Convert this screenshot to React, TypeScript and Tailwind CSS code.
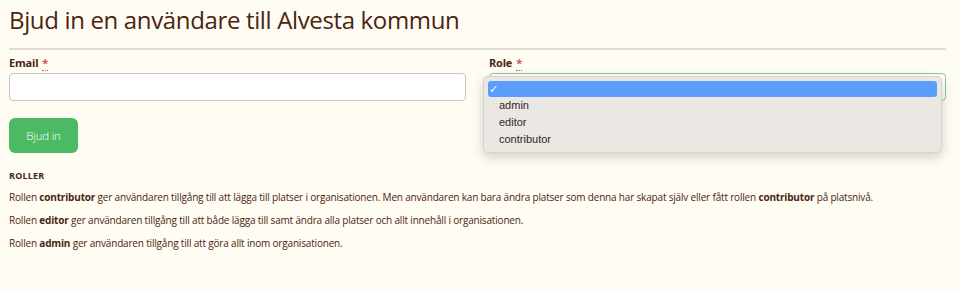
import React from 'react';

const font = { fontFamily: '"Open Sans", "Noto Sans", sans-serif' };

function Required() {
  return (
    <abbr title="required" className="ml-1 text-[#d9534f] no-underline border-b border-dotted border-[#d9534f]">
      *
    </abbr>
  );
}

function RoleDropdown() {
  const options = ['admin', 'editor', 'contributor'];
  return (
    <div
      className="absolute left-[-7px] top-[2px] w-[459px] rounded-[5px] border border-[#d6d2cd] bg-[#ebe7e3] px-[4px] pt-[4px] pb-[4px] shadow-[0_4px_12px_rgba(0,0,0,0.18)]"
      style={{ fontFamily: '"Liberation Sans", Arial, sans-serif' }}
    >
      <div className="flex h-[16px] items-center rounded-[3px] bg-[#5a9dfb] pl-[1px] text-[11px] text-white">✓</div>
      {options.map((o) => (
        <div key={o} className="flex h-[17px] items-center pl-[11px] text-[11px] text-[#2b2b2b]">
          {o}
        </div>
      ))}
    </div>
  );
}

export default function App() {
  return (
    <div className="h-[290px] w-[960px] overflow-hidden bg-[#fffcf4] text-[#4a2511]" style={font}>
      <div className="px-[9px] pt-[6px] pr-[14px]">
        <h1 className="text-[24px] leading-[28px] font-normal tracking-[-0.35px] text-[#4a2511]">
          Bjud in en användare till Alvesta kommun
        </h1>
        <div className="mt-[14px] h-[2px] bg-[#e2ddd3]" />

        <div className="mt-[5px] grid grid-cols-2 gap-x-[23px]">
          <div>
            <label className="block text-[11px] font-bold leading-[16px] tracking-[-0.2px]">
              Email
              <Required />
            </label>
            <div className="mt-[2px] h-[28px] rounded-[4px] border border-[#cfc8b8] bg-white" />
          </div>
          <div>
            <label className="block text-[11px] font-bold leading-[16px] tracking-[-0.2px]">
              Role
              <Required />
            </label>
            <div className="relative mt-[2px] h-[28px] rounded-[4px] border border-[#86cf92] bg-white">
              <span className="absolute right-[3px] top-[10px] text-[6px] leading-none text-[#555]">⬍</span>
              <RoleDropdown />
            </div>
          </div>
        </div>

        <button className="mt-[17px] flex h-[35px] w-[69px] items-center justify-center rounded-[6px] bg-[#4cb963] text-[11.5px] font-light tracking-[-0.2px] text-white">
          Bjud in
        </button>

        <h3 className="mt-[17px] text-[9px] font-bold uppercase leading-[12px] tracking-[0.2px]">Roller</h3>
        <div className="mt-[9px] space-y-[10px] text-[10px] leading-[13px] tracking-[-0.18px]">
          <p>
            Rollen <b>contributor</b> ger användaren tillgång till att lägga till platser i organisationen. Men användaren kan bara ändra platser som denna har skapat själv eller fått rollen <b>contributor</b> på platsnivå.
          </p>
          <p>
            Rollen <b>editor</b> ger användaren tillgång till att både lägga till samt ändra alla platser och allt innehåll i organisationen.
          </p>
          <p>
            Rollen <b>admin</b> ger användaren tillgång till att göra allt inom organisationen.
          </p>
        </div>
      </div>
    </div>
  );
}
